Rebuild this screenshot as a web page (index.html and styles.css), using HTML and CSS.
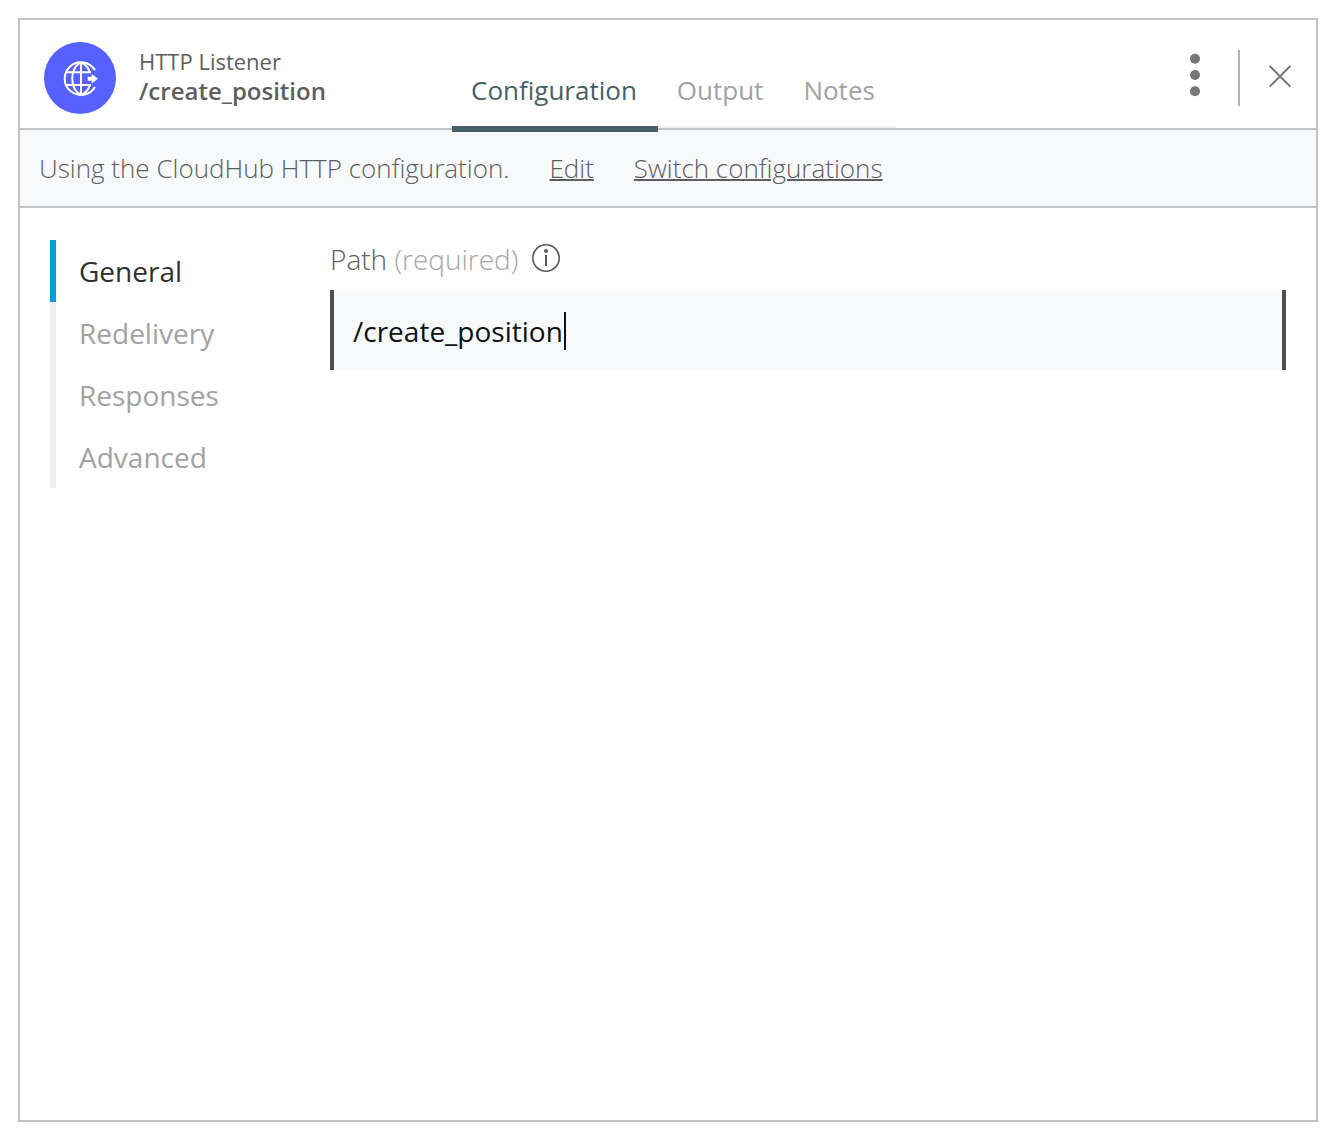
FILE: index.html
```html
<!DOCTYPE html>
<html lang="en">
<head>
<meta charset="utf-8">
<title>HTTP Listener</title>
<link rel="stylesheet" href="styles.css">
</head>
<body>
<main class="panel">
  <header class="header">
    <svg class="badge" viewBox="0 0 72 72" aria-hidden="true">
      <circle cx="36" cy="36" r="36" fill="#5660fe"/>
      <g fill="none" stroke="#fff" stroke-width="2">
        <path d="M51 28.300A16.300 16.300 0 1 0 51 45"/>
        <path d="M37 20.500v32.400M22 30.300h25M22 43h25"/>
        <path d="M36.500 20.500C25.500 27 25.500 46 36.500 52.900M37.500 20.500C41.500 22.500 44.500 26 46 30.300M46 43C44.500 47.500 41.500 51 37.500 52.900"/>
      </g>
      <path d="M43.700 34.700h4v-2.700l6.300 4.700-6.300 4.700v-2.700h-4z" fill="#fff"/>
    </svg>
    <div class="identity">
      <div class="kind">HTTP Listener</div>
      <h1 class="name">/create_position</h1>
    </div>
    <nav class="tabs">
      <button class="tab tab-active" type="button">Configuration</button>
      <button class="tab" type="button">Output</button>
      <button class="tab" type="button">Notes</button>
    </nav>
    <div class="actions">
      <button class="icon-button" type="button" aria-label="More options">
        <svg width="12" height="50" viewBox="0 0 12 50" fill="#747578"><circle cx="6" cy="5.700" r="5"/><circle cx="6" cy="22" r="5"/><circle cx="6" cy="38.300" r="5"/></svg>
      </button>
      <span class="divider"></span>
      <button class="icon-button" type="button" aria-label="Close">
        <svg width="24" height="26" viewBox="0 0 24 26" fill="none" stroke="#747578" stroke-width="2" stroke-linecap="round"><path d="M2.200 1.500l19.600 19.600M21.800 1.500L2.200 21.100"/></svg>
      </button>
    </div>
  </header>
  <div class="notice">
    <span>Using the CloudHub HTTP configuration.</span>
    <a href="#edit">Edit</a>
    <a href="#switch">Switch configurations</a>
  </div>
  <div class="content">
    <nav class="sections">
      <a class="section section-active" href="#general">General</a>
      <a class="section" href="#redelivery">Redelivery</a>
      <a class="section" href="#responses">Responses</a>
      <a class="section" href="#advanced">Advanced</a>
    </nav>
    <div class="field">
      <div class="field-head">
        <label for="path">Path <span class="required">(required)</span></label>
        <svg width="28" height="30" viewBox="0 0 28 30" aria-hidden="true"><circle cx="14" cy="14" r="13.200" fill="none" stroke="#58595a" stroke-width="1.600"/><circle cx="14" cy="7" r="2" fill="#58595a"/><path d="M14 11v11" stroke="#58595a" stroke-width="2"/></svg>
      </div>
      <div class="input-wrap">
        <input class="input" id="path" type="text" value="/create_position">
        <span class="caret"></span>
      </div>
    </div>
  </div>
</main>
</body>
</html>
```
FILE: styles.css
```css
* { box-sizing: border-box; }

body {
  margin: 0;
  background: #fff;
  color: #5d5e60;
  font-family: "Open Sans", sans-serif;
}

button, input { font: inherit; border: 0; margin: 0; }

.panel {
  display: flex;
  flex-direction: column;
  min-height: calc(100vh - 36px);
  margin: 18px 12px 18px 18px;
  border: 2px solid #c2c3c4;
}

/* Raised so the active tab's underline covers the divider below. */
.header {
  position: relative;
  z-index: 1;
  display: flex;
  align-items: stretch;
  height: 110px;
  padding: 0 24px;
  border-bottom: 2px solid #c2c3c4;
}

.badge {
  align-self: center;
  width: 72px;
  height: 72px;
  margin-top: 8px;
}

.identity {
  width: 336px;
  padding: 26px 0 0 23px;
}

.kind { font-size: 22px; line-height: 30px; }

.name {
  margin: 0;
  font-size: 24px;
  font-weight: 600;
  line-height: 30px;
}

.tabs {
  display: flex;
  height: 108px;
}

.tab {
  padding: 34px 21px 0 19px;
  background: none;
  border-bottom: 2px solid #eff0f0;
  color: #a2a2a2;
  font-size: 26px;
}

.tab-active {
  height: 112px;
  border-bottom: 6px solid #475f69;
  color: #475f69;
}

.actions {
  display: flex;
  align-items: center;
  gap: 28px;
  margin-left: auto;
  padding-top: 8px;
}

.actions .divider { margin-left: 9px; }

.icon-button {
  display: flex;
  padding: 0;
  background: none;
}

.divider {
  width: 2px;
  height: 56px;
  background: #b1b2b3;
}

.notice {
  display: flex;
  align-items: center;
  gap: 40px;
  height: 78px;
  padding: 0 19px;
  background: #f7f9fb;
  border-bottom: 2px solid #c2c3c4;
  font-size: 26px;
  font-weight: 300;
}

.notice a {
  color: inherit;
  text-decoration-thickness: 2px;
}

.content {
  display: flex;
  gap: 30px;
  padding: 32px 30px;
}

.sections {
  display: flex;
  flex-direction: column;
  width: 250px;
}

.section {
  padding-left: 23px;
  border-left: 6px solid #f0f0f0;
  color: #a2a2a2;
  font-size: 28px;
  line-height: 62px;
  text-decoration: none;
}

.section-active {
  border-color: #049cdb;
  color: #2f3031;
}

.field { flex: 1; }

.field-head {
  display: flex;
  align-items: center;
  gap: 14px;
  height: 38px;
  margin-bottom: 12px;
  font-size: 28px;
  font-weight: 300;
}

.required { color: #a5a6a7; }

.input-wrap { position: relative; }

.input {
  display: block;
  width: 100%;
  height: 80px;
  padding: 2px 20px 0 19px;
  border: solid #4d4e50;
  border-width: 0 4px;
  border-radius: 0;
  background: #f7f9fb;
  color: #0f1011;
  font-size: 28px;
}

.caret {
  position: absolute;
  top: 22px;
  left: 234px;
  width: 2px;
  height: 38px;
  background: #0f1011;
}
```
